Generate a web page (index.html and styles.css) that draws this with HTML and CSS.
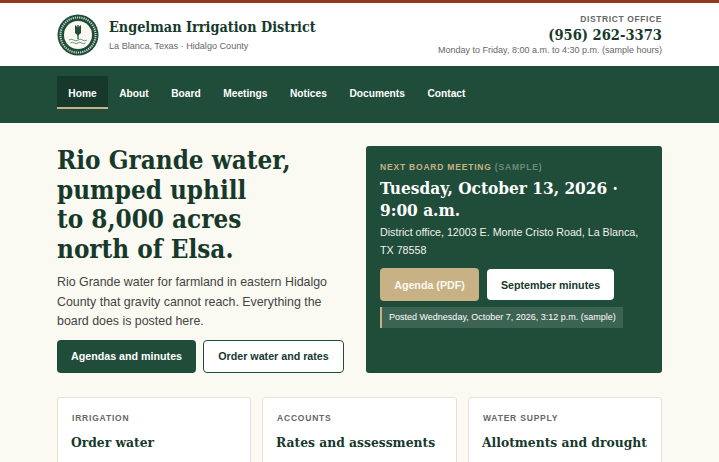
FILE: index.html
```html
<!DOCTYPE html>
<html lang="en">
<head>
<meta charset="utf-8">
<title>Engelman Irrigation District</title>
<link rel="stylesheet" href="styles.css">
</head>
<body>
<header class="masthead">
  <div class="wrap masthead-row">
    <div class="brand">
      <svg class="seal" viewBox="0 0 42 42" aria-hidden="true">
        <circle cx="21" cy="21" r="20.5" fill="#1f4d3a"/>
        <circle cx="21" cy="21" r="17.6" fill="none" stroke="#cfd9d0" stroke-width="2" stroke-dasharray="1.2 1"/>
        <circle cx="21" cy="21" r="14" fill="#fbf8ef"/>
        <path d="M21 11v14" stroke="#1f4d3a" stroke-width="1.3"/>
        <path d="M21 13.5l-3-2.5v4l3 2.5zM21 13.5l3-2.5v4l-3 2.5zM21 17.5l-3-2.5v4l3 2.5zM21 17.5l3-2.5v4l-3 2.5z" fill="#1f4d3a"/>
        <path d="M12 26q2.2-1.6 4.5 0t4.5 0t4.5 0t4.500 0M13.500 29q2-1.400 3.800 0t3.700 0t3.700 0t3.800 0" fill="none" stroke="#4d8a8a" stroke-width=".9"/>
      </svg>
      <div>
        <div class="brand-name">Engelman Irrigation District</div>
        <div class="brand-sub">La Blanca, Texas · Hidalgo County</div>
      </div>
    </div>
    <div class="office">
      <div class="office-label">DISTRICT OFFICE</div>
      <div class="office-phone">(956) 262-3373</div>
      <div class="office-hours">Monday to Friday, 8:00 a.m. to 4:30 p.m. (sample hours)</div>
    </div>
  </div>
</header>
<nav class="nav">
  <div class="wrap nav-row">
    <a class="nav-link is-current">Home</a>
    <a class="nav-link">About</a>
    <a class="nav-link">Board</a>
    <a class="nav-link">Meetings</a>
    <a class="nav-link">Notices</a>
    <a class="nav-link">Documents</a>
    <a class="nav-link">Contact</a>
  </div>
</nav>
<main class="wrap">
  <section class="hero">
    <div class="hero-copy">
      <h1 class="hero-title">Rio Grande water, pumped uphill<br>to 8,000 acres<br>north of Elsa.</h1>
      <p class="hero-text">Rio Grande water for farmland in eastern Hidalgo County that gravity cannot reach. Everything the board does is posted here.</p>
      <div class="actions">
        <a class="btn btn-primary">Agendas and minutes</a>
        <a class="btn btn-outline">Order water and rates</a>
      </div>
    </div>
    <aside class="meeting">
      <div class="meeting-label">NEXT BOARD MEETING <span class="meeting-sample">(SAMPLE)</span></div>
      <h2 class="meeting-date">Tuesday, October 13, 2026 · 9:00 a.m.</h2>
      <p class="meeting-place">District office, 12003 E. Monte Cristo Road, La Blanca, TX 78558</p>
      <div class="meeting-actions">
        <a class="btn btn-tan">Agenda (PDF)</a>
        <a class="btn btn-white">September minutes</a>
      </div>
      <div class="posted">Posted Wednesday, October 7, 2026, 3:12 p.m. (sample)</div>
    </aside>
  </section>
  <section class="cards">
    <article class="card">
      <div class="card-label">IRRIGATION</div>
      <h3 class="card-title">Order water</h3>
      <p class="card-text">Call the office to schedule a delivery to your field.</p>
    </article>
    <article class="card">
      <div class="card-label">ACCOUNTS</div>
      <h3 class="card-title">Rates and assessments</h3>
      <p class="card-text">This year's rates per acre and assessment dates.</p>
    </article>
    <article class="card">
      <div class="card-label">WATER SUPPLY</div>
      <h3 class="card-title">Allotments and drought</h3>
      <p class="card-text">The district's water supply and drought plan.</p>
    </article>
  </section>
</main>
</body>
</html>
```
FILE: styles.css
```css
* { box-sizing: border-box; }
html, body { margin: 0; padding: 0; }
body {
  background: #faf9f2;
  color: #333;
  font-family: "Liberation Sans", Arial, sans-serif;
  overflow-x: hidden;
}
.wrap { width: 605px; margin: 0 auto 0 57px; }
.masthead { background: #fff; border-top: 3px solid #8f3a20; height: 66px; }
.masthead-row { display: flex; justify-content: space-between; align-items: center; height: 63px; }
.brand { display: flex; align-items: center; gap: 10px; }
.seal { width: 42px; height: 42px; display: block; }
.brand-name {
  font-family: "DejaVu Serif Condensed", "DejaVu Serif", serif;
  font-weight: 700;
  font-size: 14.3px;
  line-height: 20px;
  color: #17392b;
}
.brand-sub { font-size: 9.1px; line-height: 13px; color: #666; margin-top: 3px; }
.office { text-align: right; }
.office-label { font-size: 8.5px; line-height: 11px; font-weight: 700; letter-spacing: .6px; color: #666; margin-top: 1px; }
.office-phone {
  font-family: "DejaVu Serif Condensed", "DejaVu Serif", serif;
  font-weight: 700;
  font-size: 14.6px;
  line-height: 20px;
  color: #17392b;
}
.office-hours { font-size: 9px; line-height: 11px; color: #666; }
.nav { background: #1f4d3a; height: 57px; padding-top: 10px; }
.nav-row { display: flex; }
.nav-link {
  display: block;
  color: #fff;
  font-size: 10.2px;
  font-weight: 700;
  line-height: 14px;
  padding: 11px 11.3px 8px;
  height: 33px;
  border-bottom: 2px solid transparent;
}
.is-current { background: #17392b; border-bottom-color: #c8b285; }
.hero { display: grid; grid-template-columns: 287px 296px; column-gap: 22px; padding-top: 23px; }
.hero-title {
  font-family: "DejaVu Serif Condensed", "DejaVu Serif", serif;
  font-weight: 700;
  font-size: 25.8px;
  line-height: 29.5px;
  color: #17392b;
  margin: 0 0 9px;
}
.hero-text { font-size: 12.4px; line-height: 19.5px; color: #444; margin: 0 0 8px; }
.actions { display: flex; gap: 7px; }
.btn {
  display: flex;
  align-items: center;
  justify-content: center;
  font-size: 10.7px;
  font-weight: 700;
  border-radius: 4px;
}
.btn-primary { background: #1f4d3a; color: #fff; width: 139px; height: 33px; }
.btn-outline { background: #fff; color: #17392b; border: 1.5px solid #1f4d3a; width: 141px; height: 33px; }
.meeting {
  background: #1f4d3a;
  border-radius: 3px;
  padding: 16px 14px 0;
  height: 227px;
  color: #fff;
}
.meeting-label { font-size: 8.5px; line-height: 11px; font-weight: 700; letter-spacing: .8px; color: #c8b285; }
.meeting-sample { color: #6c8a79; }
.meeting-date {
  font-family: "DejaVu Serif Condensed", "DejaVu Serif", serif;
  font-weight: 700;
  font-size: 17.1px;
  line-height: 21.5px;
  margin: 5px 0 0;
}
.meeting-place { font-size: 10.7px; line-height: 18px; margin: 2px 0 0; color: #f3f1ea; }
.meeting-actions { display: flex; align-items: center; gap: 8px; margin-top: 9px; }
.btn-tan { background: #c8b285; color: #faf8f1; width: 99px; height: 33px; }
.btn-white { background: #fff; color: #17392b; width: 127px; height: 31px; }
.posted {
  background: #3d6453;
  border-left: 2px solid #c8b285;
  font-size: 9px;
  line-height: 21px;
  padding: 0 7px;
  width: 243px;
  margin-top: 6px;
  white-space: nowrap;
}
.cards { display: grid; grid-template-columns: 194px 195px 194px; gap: 11px; padding-top: 24px; }
.card { background: #fff; border: 1px solid #e6e2d8; border-radius: 3px; padding: 14px 13px; height: 120px; }
.card-label { font-size: 8.5px; line-height: 12px; font-weight: 700; letter-spacing: .8px; color: #666; padding-left: 1px; }
.card-title {
  font-family: "DejaVu Serif Condensed", "DejaVu Serif", serif;
  font-weight: 700;
  font-size: 13.7px;
  line-height: 20px;
  color: #17392b;
  margin: 8px 0 0;
  white-space: nowrap;
}
.card-text { font-size: 10.5px; line-height: 16px; margin: 7px 0 0; color: #444; padding-left: 1px; }
```
